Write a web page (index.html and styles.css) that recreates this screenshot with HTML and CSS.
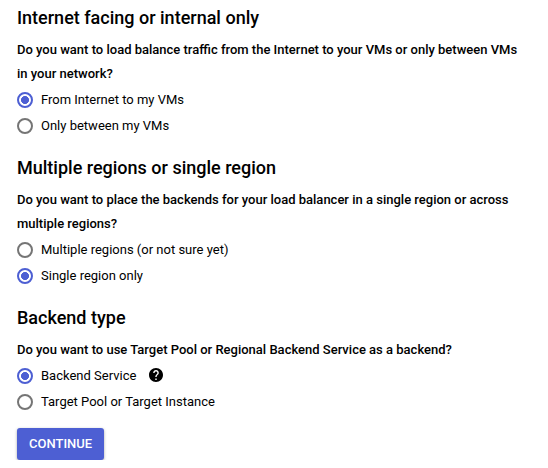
FILE: index.html
```html
<!DOCTYPE html>
<html lang="en">
<head>
  <meta charset="UTF-8">
  <title>Create a load balancer</title>
  <link rel="stylesheet" href="styles.css">
</head>
<body>

  <form class="lb-form">
    <section class="group">
      <h2>Internet facing or internal only</h2>
      <p class="question">Do you want to load balance traffic from the Internet to your VMs or only between VMs in your network?</p>
      <label class="option"><input type="radio" name="facing" checked><span>From Internet to my VMs</span></label>
      <label class="option"><input type="radio" name="facing"><span>Only between my VMs</span></label>
    </section>

    <section class="group">
      <h2>Multiple regions or single region</h2>
      <p class="question">Do you want to place the backends for your load balancer in a single region or across multiple regions?</p>
      <label class="option"><input type="radio" name="region"><span>Multiple regions (or not sure yet)</span></label>
      <label class="option"><input type="radio" name="region" checked><span>Single region only</span></label>
    </section>

    <section class="group">
      <h2>Backend type</h2>
      <p class="question">Do you want to use Target Pool or Regional Backend Service as a backend?</p>
      <label class="option">
        <input type="radio" name="backend" checked><span>Backend Service</span>
        <svg class="help" viewBox="2 2 20 20" width="14" height="14">
          <path d="M12 2C6.48 2 2 6.48 2 12s4.480 10 10 10 10-4.480 10-10S17.520 2 12 2zm1 17h-2v-2h2v2zm2.070-7.750l-.9.920C13.450 12.900 13 13.500 13 15h-2v-.5c0-1.100.45-2.100 1.170-2.830l1.240-1.260c.37-.36.59-.86.59-1.410 0-1.100-.9-2-2-2s-2 .9-2 2H8c0-2.210 1.790-4 4-4s4 1.790 4 4c0 .88-.36 1.680-.93 2.250z"/>
        </svg>
      </label>
      <label class="option"><input type="radio" name="backend"><span>Target Pool or Target Instance</span></label>
    </section>

    <button type="button" class="continue">CONTINUE</button>
  </form>

</body>
</html>
```
FILE: styles.css
```css
body {
  margin: 0;
  background-color: #fff;
  color: #000;
  font-family: Roboto, sans-serif;
  font-size: 13px;
}

.lb-form {
  padding: 6px 24px 0 17px;
}

.group {
  margin-bottom: 17px;
}

.group:last-of-type {
  margin-bottom: 13px;
}

h2 {
  margin: 0 0 8px;
  font-size: 18px;
  font-weight: 500;
  line-height: 24px;
}

.question {
  margin: 0 0 1px;
  font-weight: 500;
  line-height: 24px;
}

.option {
  display: flex;
  align-items: center;
  height: 26px;
}

.option input {
  appearance: none;
  box-sizing: border-box;
  width: 16px;
  height: 16px;
  margin: 0 8px 0 0;
  border: 2px solid #757575;
  border-radius: 50%;
}

.option span {
  line-height: 24px;
}

.option input:checked {
  border-color: #4d5fd3;
  background: radial-gradient(circle, #4d5fd3 3.7px, transparent 4.3px);
}

.help {
  margin-left: 13px;
  margin-bottom: 2px;
}

.continue {
  display: block;
  height: 32px;
  padding: 0 12px 2px;
  border: none;
  border-radius: 3px;
  background-color: #4d5fd3;
  box-shadow: 0 1px 3px rgba(0, 0, 0, 0.35);
  color: #fff;
  font-family: inherit;
  font-size: 13px;
  font-weight: 500;
}
```
